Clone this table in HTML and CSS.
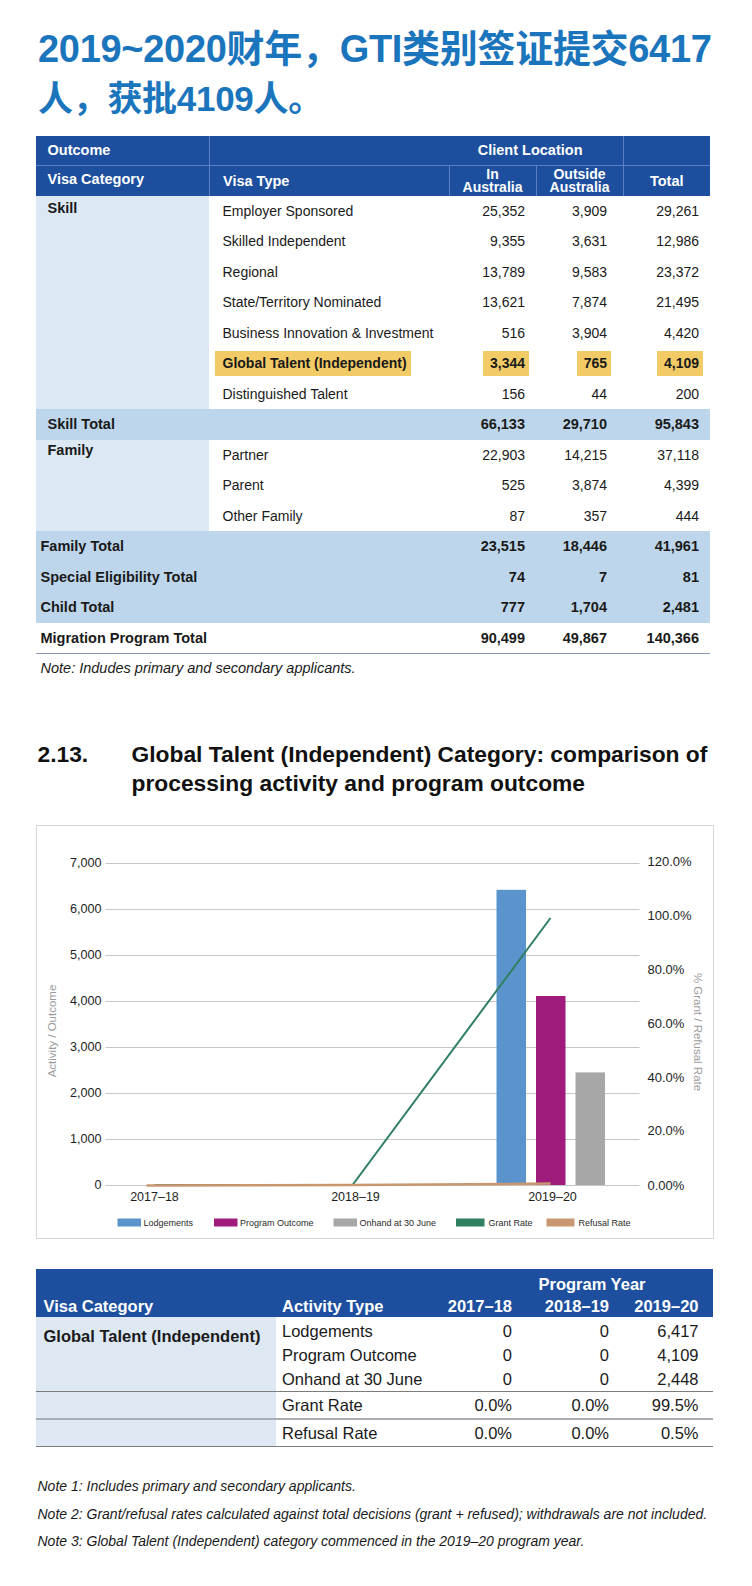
FILE: index.html
```html
<!DOCTYPE html>
<html lang="zh-CN">
<head>
<meta charset="utf-8">
<title>Global Talent</title>
<link rel="stylesheet" href="styles.css">
</head>
<body>
<div class="page">
  <h1 class="title">2019~2020财年，GTI类别签证提交6417<br><span class="title2">人，获批4109人。</span></h1>

  <table class="t1">
    <colgroup><col class="c1"><col class="c2"><col class="c3"><col class="c4"><col class="c5"></colgroup>
    <thead>
      <tr class="hr1">
        <th class="lbl sep">Outcome</th>
        <th colspan="3" class="cl sep">Client Location</th>
        <th></th>
      </tr>
      <tr class="hr2">
        <th class="lbl sep vcat">Visa Category</th>
        <th class="vt sep">Visa Type</th>
        <th class="two sep">In<br>Australia</th>
        <th class="two sep">Outside<br>Australia</th>
        <th class="ctr">Total</th>
      </tr>
    </thead>
    <tbody>
      <tr><td rowspan="7" class="cat skill">Skill</td><td class="vt">Employer Sponsored</td><td class="n3">25,352</td><td class="n4">3,909</td><td class="n5">29,261</td></tr>
      <tr><td class="vt">Skilled Independent</td><td class="n3">9,355</td><td class="n4">3,631</td><td class="n5">12,986</td></tr>
      <tr><td class="vt">Regional</td><td class="n3">13,789</td><td class="n4">9,583</td><td class="n5">23,372</td></tr>
      <tr><td class="vt">State/Territory Nominated</td><td class="n3">13,621</td><td class="n4">7,874</td><td class="n5">21,495</td></tr>
      <tr><td class="vt">Business Innovation &amp; Investment</td><td class="n3">516</td><td class="n4">3,904</td><td class="n5">4,420</td></tr>
      <tr class="gt"><td class="vt"><span class="hl">Global Talent (Independent)</span></td><td class="n3"><span class="hl hn">3,344</span></td><td class="n4"><span class="hl hn">765</span></td><td class="n5"><span class="hl hn">4,109</span></td></tr>
      <tr><td class="vt">Distinguished Talent</td><td class="n3">156</td><td class="n4">44</td><td class="n5">200</td></tr>
      <tr class="tot"><td class="lbl">Skill Total</td><td></td><td class="n3">66,133</td><td class="n4">29,710</td><td class="n5">95,843</td></tr>
      <tr><td rowspan="3" class="cat family">Family</td><td class="vt">Partner</td><td class="n3">22,903</td><td class="n4">14,215</td><td class="n5">37,118</td></tr>
      <tr><td class="vt">Parent</td><td class="n3">525</td><td class="n4">3,874</td><td class="n5">4,399</td></tr>
      <tr><td class="vt">Other Family</td><td class="n3">87</td><td class="n4">357</td><td class="n5">444</td></tr>
      <tr class="tot"><td colspan="2" class="lbl2">Family Total</td><td class="n3">23,515</td><td class="n4">18,446</td><td class="n5">41,961</td></tr>
      <tr class="tot"><td colspan="2" class="lbl2">Special Eligibility Total</td><td class="n3">74</td><td class="n4">7</td><td class="n5">81</td></tr>
      <tr class="tot"><td colspan="2" class="lbl2">Child Total</td><td class="n3">777</td><td class="n4">1,704</td><td class="n5">2,481</td></tr>
      <tr class="grand"><td colspan="2" class="lbl2">Migration Program Total</td><td class="n3">90,499</td><td class="n4">49,867</td><td class="n5">140,366</td></tr>
    </tbody>
  </table>
  <p class="note1">Note: Indudes primary and secondary applicants.</p>

  <h2 class="sec">
    <span class="secnum">2.13.</span>
    <span class="sectext">Global Talent (Independent) Category: comparison of processing activity and program outcome</span>
  </h2>

  <div class="chart">
    <svg class="plot" width="675" height="411" viewBox="37.5 826 675 411" xmlns="http://www.w3.org/2000/svg">
      <g class="grid">
        <line x1="106" x2="640" y1="863.5" y2="863.5"/>
        <line x1="106" x2="640" y1="909.5" y2="909.5"/>
        <line x1="106" x2="640" y1="955.5" y2="955.5"/>
        <line x1="106" x2="640" y1="1001.5" y2="1001.5"/>
        <line x1="106" x2="640" y1="1047.5" y2="1047.5"/>
        <line x1="106" x2="640" y1="1093.5" y2="1093.5"/>
        <line x1="106" x2="640" y1="1139.5" y2="1139.5"/>
        <line x1="106" x2="640" y1="1185.5" y2="1185.5"/>
      </g>
      <g class="ylab">
        <text x="102" y="866.5">7,000</text>
        <text x="102" y="912.5">6,000</text>
        <text x="102" y="958.5">5,000</text>
        <text x="102" y="1004.5">4,000</text>
        <text x="102" y="1050.5">3,000</text>
        <text x="102" y="1096.5">2,000</text>
        <text x="102" y="1142.5">1,000</text>
        <text x="102" y="1188.5">0</text>
      </g>
      <g class="rlab">
        <text x="648" y="865.5">120.0%</text>
        <text x="648" y="919.5">100.0%</text>
        <text x="648" y="974">80.0%</text>
        <text x="648" y="1027.5">60.0%</text>
        <text x="648" y="1081.5">40.0%</text>
        <text x="648" y="1135">20.0%</text>
        <text x="648" y="1189.5">0.00%</text>
      </g>
      <text class="axt" x="56.5" y="1031" transform="rotate(-90 56.5 1031)">Activity / Outcome</text>
      <text class="axt" x="694" y="1032" transform="rotate(90 694 1032)">% Grant / Refusal Rate</text>

      <rect class="b-lodge" x="497" y="889.8" width="29.5" height="295.2"/>
      <rect class="b-prog" x="536.5" y="996" width="29.5" height="189"/>
      <rect class="b-hand" x="576" y="1072.4" width="29.5" height="112.6"/>

      <polyline class="l-grant" points="155,1185 353,1185 551,918"/>
      <polyline class="l-ref" points="147,1185.5 353,1185 551,1183.6"/>

      <g class="xlab">
        <text x="155" y="1201">2017–18</text>
        <text x="356" y="1201">2018–19</text>
        <text x="553" y="1201">2019–20</text>
      </g>

      <g class="legend">
        <rect class="b-lodge" x="118" y="1218.5" width="23.5" height="8"/>
        <text x="144" y="1225.5">Lodgements</text>
        <rect class="b-prog" x="214.5" y="1218.5" width="23.5" height="8"/>
        <text x="240.5" y="1225.5">Program Outcome</text>
        <rect class="b-hand" x="334" y="1218.5" width="23.5" height="8"/>
        <text x="360" y="1225.5">Onhand at 30 June</text>
        <rect class="sw-grant" x="456.5" y="1218.5" width="28.5" height="8"/>
        <text x="489" y="1225.5">Grant Rate</text>
        <rect class="sw-ref" x="547" y="1218.5" width="28" height="8"/>
        <text x="579" y="1225.5">Refusal Rate</text>
      </g>
    </svg>
  </div>

  <table class="t2">
    <colgroup><col class="d1"><col class="d2"><col class="d3"><col class="d4"><col class="d5"></colgroup>
    <thead>
      <tr class="r1"><th></th><th></th><th colspan="3" class="py">Program Year</th></tr>
      <tr class="r2"><th class="vc">Visa Category</th><th class="at">Activity Type</th><th class="y">2017–18</th><th class="y">2018–19</th><th class="y y5">2019–20</th></tr>
    </thead>
    <tbody>
      <tr class="first"><td rowspan="3" class="cat g1">Global Talent (Independent)</td><td class="at">Lodgements</td><td class="y">0</td><td class="y">0</td><td class="y y5">6,417</td></tr>
      <tr><td class="at">Program Outcome</td><td class="y">0</td><td class="y">0</td><td class="y y5">4,109</td></tr>
      <tr class="last"><td class="at">Onhand at 30 June</td><td class="y">0</td><td class="y">0</td><td class="y y5">2,448</td></tr>
      <tr class="gr"><td class="cat"></td><td class="at">Grant Rate</td><td class="y">0.0%</td><td class="y">0.0%</td><td class="y y5">99.5%</td></tr>
      <tr class="rr"><td class="cat"></td><td class="at">Refusal Rate</td><td class="y">0.0%</td><td class="y">0.0%</td><td class="y y5">0.5%</td></tr>
    </tbody>
  </table>

  <div class="notes">
    <p>Note 1: Includes primary and secondary applicants.</p>
    <p>Note 2: Grant/refusal rates calculated against total decisions (grant + refused); withdrawals are not included.</p>
    <p>Note 3: Global Talent (Independent) category commenced in the 2019–20 program year.</p>
  </div>
</div>
</body>
</html>
```

FILE: styles.css
```css
* { box-sizing: border-box; }
html, body { margin: 0; padding: 0; background: #ffffff; }
body {
  font-family: "Liberation Sans", Arial, sans-serif;
  color: #1a1a1a;
  width: 752px;
}
.page { padding: 25px 0 0 36px; }

.title {
  margin: 0 0 13px 2px;
  font-family: "Liberation Sans", "Noto Sans CJK SC", sans-serif;
  font-weight: 700;
  font-size: 38px;
  line-height: 49px;
  letter-spacing: -0.3px;
  color: #1b75bc;
}
.title2 { font-size: 35px; }

/* ---------- table 1 ---------- */
.t1 {
  width: 674px;
  table-layout: fixed;
  border-collapse: collapse;
  font-size: 14px;
  line-height: 16px;
}
.t1 col.c1 { width: 173px; }
.t1 col.c2 { width: 240px; }
.t1 col.c3 { width: 87px; }
.t1 col.c4 { width: 87px; }
.t1 col.c5 { width: 87px; }

.t1 th {
  background: #1d4f9e;
  color: #ffffff;
  font-weight: 700;
  font-size: 14.5px;
  padding: 0;
  text-align: left;
}
.t1 tr.hr1 { height: 29px; }
.t1 tr.hr2 { height: 30.5px; }
.t1 tr.hr1 th { border-bottom: 1px solid #5a80c3; }
.t1 th.sep { border-right: 1px solid #5a80c3; }
.t1 th.lbl { padding-left: 11.5px; }
.t1 th.vcat { padding-bottom: 3px; }
.t1 th.cl { text-align: right; padding-right: 40px; }
.t1 th.vt { padding-left: 13.5px; }
.t1 th.two { text-align: center; line-height: 13px; font-size: 14px; }
.t1 th.ctr { text-align: center; }

.t1 tbody tr { height: 30.5px; }
.t1 td { padding: 0; vertical-align: middle; white-space: nowrap; }
.t1 td.vt { padding-left: 13.5px; }
.t1 td.n3 { text-align: right; padding-right: 11px; }
.t1 td.n4 { text-align: right; padding-right: 16px; }
.t1 td.n5 { text-align: right; padding-right: 11px; }

.t1 td.cat {
  background: #dce8f3;
  font-weight: 700;
  vertical-align: top;
  padding-left: 11.5px;
  font-size: 14.5px;
}
.t1 td.skill { padding-top: 4px; }
.t1 td.family { padding-top: 2px; }

.t1 tr.tot td { background: #bed6eb; font-weight: 700; font-size: 14.5px; }
.t1 td.lbl { padding-left: 11.5px; }
.t1 td.lbl2 { padding-left: 4.5px; }
.t1 tr.grand td { font-weight: 700; font-size: 14.5px; border-bottom: 1.5px solid #8a9bb1; }

.hl {
  display: inline-block;
  background: #f2cb67;
  font-weight: 700;
  line-height: 17px;
  padding: 4px 4.5px 4px 7.5px;
  margin-left: -7.5px;
}
.hl.hn {
  padding: 4px 4px 4px 7px;
  margin-left: 0;
  margin-right: -4px;
}

.note1 {
  margin: 6px 0 0 4.5px;
  font-style: italic;
  font-size: 14.5px;
  line-height: 17px;
}

/* ---------- section heading ---------- */
.sec {
  display: flex;
  margin: 63px 0 0 1.5px;
  font-size: 22.8px;
  line-height: 29px;
  font-weight: 700;
  color: #111111;
}
.secnum { flex: 0 0 94px; }
.sectext { flex: 1 1 auto; }

/* ---------- chart ---------- */
.chart {
  width: 678px;
  height: 414px;
  margin-top: 27px;
  border: 1.5px solid #d7d7d7;
}
.plot { display: block; }
.grid line { stroke: #c6c6c6; stroke-width: 1.2; }
.ylab text {
  font-family: "Liberation Sans", Arial, sans-serif;
  font-size: 12.6px;
  text-anchor: end;
  fill: #1e1e1e;
}
.rlab text {
  font-family: "Liberation Sans", Arial, sans-serif;
  font-size: 13px;
  fill: #1e1e1e;
}
.xlab text {
  font-family: "Liberation Sans", Arial, sans-serif;
  font-size: 12.5px;
  text-anchor: middle;
  fill: #1e1e1e;
}
.axt {
  font-family: "Liberation Sans", Arial, sans-serif;
  font-size: 11.5px;
  text-anchor: middle;
  fill: #9c9c9c;
}
.b-lodge { fill: #5b94cd; }
.b-prog { fill: #9f1b7c; }
.b-hand { fill: #a7a7a7; }
.sw-grant { fill: #2f7f60; }
.sw-ref { fill: #c9976f; }
.l-grant { fill: none; stroke: #2f7f60; stroke-width: 2; }
.l-ref { fill: none; stroke: #c9976f; stroke-width: 2.5; }
.legend text {
  font-family: "Liberation Sans", Arial, sans-serif;
  font-size: 9px;
  fill: #2a2a2a;
}

/* ---------- table 2 ---------- */
.t2 {
  margin-top: 30.5px;
  width: 677px;
  table-layout: fixed;
  border-collapse: collapse;
  font-size: 16.5px;
  line-height: 20px;
}
.t2 col.d1 { width: 239.5px; }
.t2 col.d2 { width: 154px; }
.t2 col.d3 { width: 90px; }
.t2 col.d4 { width: 97px; }
.t2 col.d5 { width: 96.5px; }

.t2 th {
  background: #1d4f9e;
  color: #ffffff;
  font-weight: 700;
  text-align: left;
  padding: 0;
  white-space: nowrap;
}
.t2 tr.r1 { height: 26px; }
.t2 tr.r1 th { vertical-align: bottom; padding-bottom: 1px; }
.t2 tr.r2 { height: 22px; }
.t2 tr.r2 th { vertical-align: top; padding-top: 1px; }
.t2 th.py { text-align: right; padding-right: 67.5px; }
.t2 .vc { padding-left: 7.5px; }
.t2 .at { padding-left: 6.5px; }
.t2 .y { text-align: right; padding-right: 7.5px; }
.t2 .y5 { padding-right: 14.5px; }

.t2 td { padding: 0; vertical-align: middle; white-space: nowrap; }
.t2 tbody tr { height: 24.3px; }
.t2 tr.first { height: 26.3px; }
.t2 tr.first td { padding-top: 2px; }
.t2 td.cat {
  background: #dde8f3;
  font-weight: 700;
  vertical-align: top;
  padding-left: 7.5px;
  padding-top: 9px;
}
.t2 tr.first td.cat { padding-top: 9px; }
.t2 tr.last td,
.t2 td.cat.g1 { border-bottom: 1.5px solid #7c7c7c; }
.t2 tr.gr { height: 27px; }
.t2 tr.gr td { border-bottom: 2px solid #a9adb3; }
.t2 tr.rr { height: 28px; }
.t2 tr.rr td { border-bottom: 1.5px solid #7c7c7c; }

.notes { margin-top: 26px; }
.notes p {
  margin: 0 0 0 1.5px;
  font-style: italic;
  font-size: 14px;
  line-height: 27.5px;
}
```
